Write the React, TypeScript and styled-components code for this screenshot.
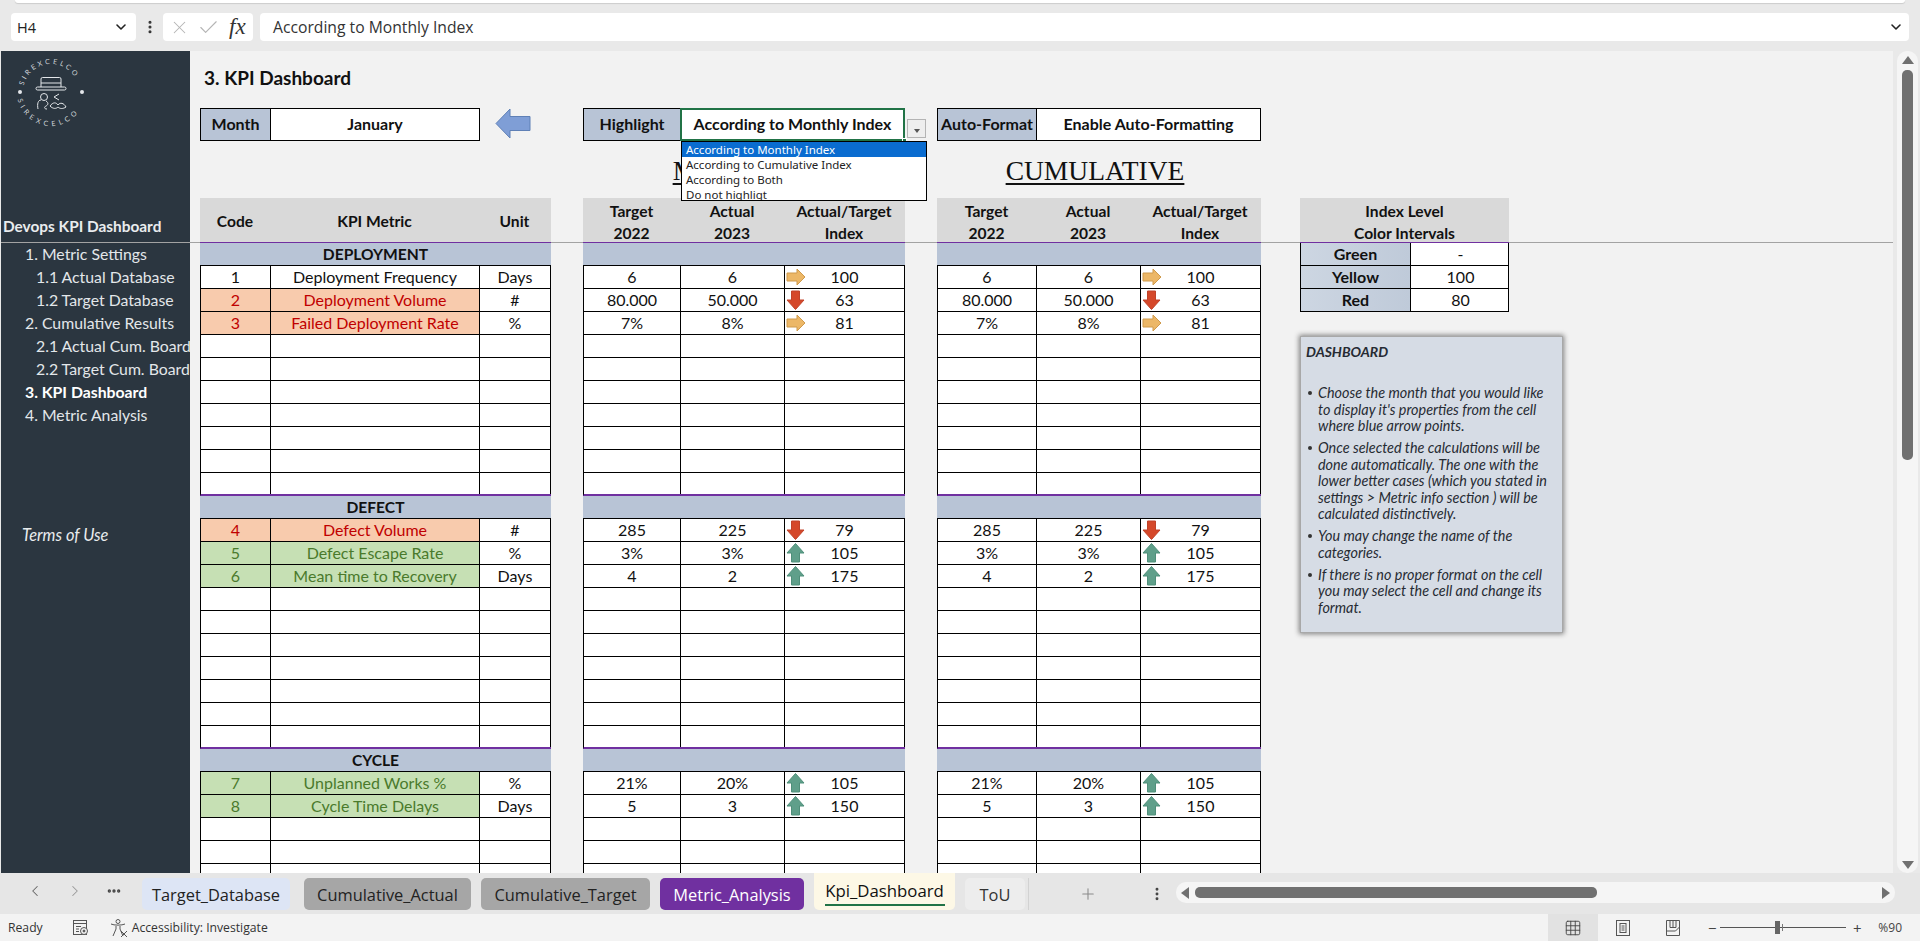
import React from "react";
import styled, { createGlobalStyle } from "styled-components";
import { ChevronDown, ChevronLeft, ChevronRight, Check, X, Plus, MoreVertical, MoreHorizontal, Grid3x3 } from "lucide-react";

const Global = createGlobalStyle`
  html, body { margin: 0; padding: 0; height: 100%; overflow: hidden; background: #e9e9e9; }
  * { box-sizing: border-box; }
  body { font-family: Lato, "Liberation Sans", sans-serif; color: #111; }
`;

const Page = styled.div`
  width: 1920px; height: 941px; display: flex; flex-direction: column; background: #e9e9e9; overflow: hidden;
`;
const TopStrip = styled.div`
  height: 3px; margin: 0 15px; background: #fff; border-radius: 0 0 6px 6px; box-shadow: 0 1px 1px #ccc; flex: none;
`;
const FormulaBar = styled.div`
  flex: none; height: 48px; padding: 10px 11px 10px 11px; display: flex; align-items: flex-start; font-family: "Open Sans", sans-serif;
`;
const NameBox = styled.div`
  width: 125px; height: 28px; background: #fff; border-radius: 4px; display: flex; align-items: center; justify-content: space-between;
  padding: 0 7px 0 6px; font-size: 14.5px; color: #222;
`;
const DotsSlot = styled.div`
  width: 27px; height: 28px; display: flex; align-items: center; justify-content: center; color: #333;
`;
const FxBox = styled.div`
  width: 90px; height: 28px; background: #fff; border-radius: 4px; display: flex; align-items: center; padding: 0 5px 0 6px; gap: 7px; color: #b5b5b5;
`;
const FxText = styled.span`
  font-family: "Liberation Serif", serif; font-style: italic; font-size: 23px; color: #333; margin-left: 2px;
`;
const FormulaInput = styled.div`
  flex: 1; margin-left: 7px; height: 28px; background: #fff; border-radius: 4px; display: flex; align-items: center; justify-content: space-between;
  padding: 0 5px 0 13px; font-size: 15.7px; color: #333;
`;

const Main = styled.div`
  flex: none; height: 822px; position: relative; display: flex; padding-left: 1px; overflow: hidden;
`;
const FreezeLine = styled.div`
  position: absolute; left: 1px; width: 1892px; top: 191px; height: 1px; background: #a3a3a3; z-index: 1;
`;
const Sidebar = styled.aside`
  width: 189px; flex: none; background: #2b3640; color: #e9ecee; display: flex; flex-direction: column; overflow: hidden; white-space: nowrap; font-size: 15.8px;
`;
const LogoWrap = styled.div`
  height: 160px; padding: 0 0 0 8px; flex: none;
`;
const Brand = styled.div`
  height: 32px; padding: 6px 0 0 2px; font-weight: 700; font-size: 15.4px; line-height: 19px; flex: none;
`;
const NavItem = styled.div<{ $level: number; $bold?: boolean }>`
  height: 23px; line-height: 21px; flex: none; padding-left: ${(p) => (p.$level === 1 ? 24 : 35)}px; font-weight: ${(p) => (p.$bold ? 700 : 400)};
  color: ${(p) => (p.$bold ? "#fff" : "#e3e7ea")};
`;
const Terms = styled.div`
  margin-top: 96px; padding-left: 21px; font-style: italic; font-size: 16.4px; height: 23px; line-height: 23px;
`;

const Sheet = styled.div`
  width: 1703px; flex: none; background: #f2f2f2; padding-left: 10px; overflow: hidden;
`;
const Title = styled.h1`
  margin: 0; height: 57px; padding: 16px 0 0 4px; font-size: 19px; line-height: 22px; font-weight: 700; color: #111;
`;
const Columns = styled.div`
  display: grid; grid-template-columns: 351px 322px 324px 263px; column-gap: 32px; position: relative; z-index: 2;
`;
const Column = styled.div<{ $shift?: number }>`
  position: relative; display: flex; flex-direction: column; margin-left: ${(p) => p.$shift ?? 0}px;
`;
const ControlRow = styled.div`
  height: 33px; display: flex; align-items: flex-start; gap: 15px; flex: none;
`;
const ControlBox = styled.div<{ $cols: string; $w: number }>`
  width: ${(p) => p.$w}px; height: 33px; display: grid; grid-template-columns: ${(p) => p.$cols}; border: 1px solid #000; background: #fff;
  font-weight: 700; font-size: 16px;
`;
const ControlLabel = styled.div`
  background: #b8c4d6; border-right: 1px solid #000; display: flex; align-items: center; justify-content: center; white-space: nowrap; padding-bottom: 2px;
`;
const ControlValue = styled.div<{ $selected?: boolean }>`
  display: flex; align-items: center; justify-content: center; position: relative; padding-bottom: 2px;
  ${(p) => (p.$selected ? "outline: 2px solid #217346; outline-offset: -1px;" : "")}
`;
const FillHandle = styled.span`
  position: absolute; right: -3px; bottom: -3px; width: 5px; height: 5px; background: #217346; border: 1px solid #fff;
`;
const DropButton = styled.div`
  position: absolute; left: 324px; top: 11px; width: 19px; height: 19px; background: #eeeeee; border: 1px solid #b4b4b4; z-index: 5;
  display: flex; align-items: center; justify-content: center; padding-top: 5px;
  &::after { content: ""; border-left: 3.5px solid transparent; border-right: 3.5px solid transparent; border-top: 4px solid #555; }
`;
const DropList = styled.div`
  position: absolute; left: 98px; top: 33px; width: 246px; height: 60px; background: #fff; border: 1px solid #000; z-index: 6;
  font-family: "Noto Sans", sans-serif; font-size: 11.5px; overflow: hidden;
`;
const DropOption = styled.div<{ $active?: boolean }>`
  height: 15px; line-height: 15px; padding-left: 4px; white-space: nowrap;
  background: ${(p) => (p.$active ? "#0a6cd0" : "#fff")}; color: ${(p) => (p.$active ? "#fff" : "#222")};
`;
const Heading = styled.div`
  height: 57px; flex: none; display: flex; align-items: center; justify-content: center; padding: 2px 8px 0 0;
  font-family: "Liberation Serif", serif; font-size: 27.5px; color: #111; text-decoration: underline; text-underline-offset: 3px; text-decoration-thickness: 2px;
`;
const Spacer = styled.div<{ $h: number }>`
  height: ${(p) => p.$h}px; flex: none;
`;
const HeaderRow = styled.div<{ $cols: string }>`
  height: 45px; flex: none; display: grid; grid-template-columns: ${(p) => p.$cols}; background: #d9d9d9; border-bottom: 1px solid #7030a0;
`;
const HeaderCell = styled.div`
  display: flex; align-items: center; justify-content: center; text-align: center; font-weight: 700; font-size: 15.6px; line-height: 22px; white-space: pre-line; padding-top: 2px;
`;
const Band = styled.div`
  height: 23px; flex: none; background: #b8c4d6; border-bottom: 1px solid #000; text-align: center; font-weight: 700; font-size: 15.6px; line-height: 22px;
`;
const Row = styled.div<{ $cols: string; $last?: boolean }>`
  height: 23px; flex: none; display: grid; grid-template-columns: ${(p) => p.$cols}; background: #fff; border-left: 1px solid #000;
  border-bottom: ${(p) => (p.$last ? "2px solid #7030a0" : "1px solid #000")};
`;
const Cell = styled.div<{ $tone?: "bad" | "good" }>`
  position: relative; border-right: 1px solid #000; display: flex; align-items: center; justify-content: center; font-size: 16px; white-space: nowrap; color: #111; padding-bottom: 2px;
  ${(p) => p.$tone === "bad" && "background:#f8cbad;color:#c00000;"}
  ${(p) => p.$tone === "good" && "background:#c6e0b4;color:#4a7a2c;"}
`;
const IconSlot = styled.span`
  position: absolute; left: 1px; top: 1px; width: 20px; height: 20px; display: block;
`;
const IndexRow = styled.div`
  height: 23px; width: 209px; display: grid; grid-template-columns: 110px 99px; border: 1px solid #000; border-top: 0; background: #fff; font-size: 16px;
`;
const IndexHead = styled(HeaderRow)`
  width: 209px;
`;
const IndexLabel = styled.div`
  background: linear-gradient(90deg, #cdd6e2, #bfcad9); border-right: 1px solid #000; display: flex; align-items: center; justify-content: center; font-weight: 700; padding-bottom: 2px;
`;
const IndexValue = styled.div`
  display: flex; align-items: center; justify-content: center; padding-bottom: 2px;
`;
const NoteBox = styled.div`
  margin-top: 24px; width: 263px; height: 297px; background: #d6dce5; border: 1px solid #a8a8a8; box-shadow: 0 0 5px 1px #808080;
  padding: 7px 4px 0 5px; font-style: italic; font-size: 14.4px; line-height: 16.5px; color: #262b33;
`;
const NoteTitle = styled.div`
  height: 41px; font-weight: 700; font-size: 14px;
`;
const NoteList = styled.ul`
  margin: 0; padding: 0 0 0 12px; list-style: none;
`;
const NoteItem = styled.li`
  position: relative; margin-bottom: 5.6px;
  &::before { content: ""; position: absolute; left: -10px; top: 6px; width: 4px; height: 4px; border-radius: 50%; background: #333; }
`;

const VScroll = styled.div`
  flex: none; width: 21px; margin-left: 4px; background: #f5f5f5; border-radius: 10px; display: flex; flex-direction: column; align-items: center; padding-top: 5px; position: relative; height: 822px;
`;
const VThumb = styled.div`
  width: 11px; height: 390px; margin-top: 6px; background: #707070; border-radius: 5px;
`;
const TriUp = styled.div`
  width: 0; height: 0; border-left: 6px solid transparent; border-right: 6px solid transparent; border-bottom: 8px solid #707070;
`;
const TriDown = styled.div`
  position: absolute; bottom: 4px; left: 4.5px; width: 0; height: 0; border-left: 6px solid transparent; border-right: 6px solid transparent; border-top: 8px solid #707070;
`;

const TabBar = styled.div`
  flex: none; height: 41px; background: #e6e6e6; display: flex; align-items: flex-start; font-family: "Open Sans", sans-serif;
`;
const TabNav = styled.div`
  width: 142px; height: 36px; flex: none; display: flex; align-items: center; color: #666; padding-left: 26px; gap: 22px;
`;
const Tabs = styled.div`
  display: flex; gap: 10px; height: 37px;
`;
const Tab = styled.div<{ $w: number; $bg: string; $fg?: string; $gapAfter?: number }>`
  width: ${(p) => p.$w}px; height: 32px; margin-top: 5px; margin-right: ${(p) => p.$gapAfter ?? 0}px; background: ${(p) => p.$bg}; color: ${(p) => p.$fg ?? "#222"};
  border-radius: 5px; display: flex; align-items: center; justify-content: center; font-size: 16.4px; white-space: nowrap;
`;
const ActiveTab = styled.div`
  width: 141px; height: 37px; background: #fdf8e6; border-radius: 0 0 5px 5px; display: flex; flex-direction: column; align-items: center; padding-top: 5px;
  font-size: 16.8px; line-height: 26px; font-weight: 500; color: #111; white-space: nowrap;
  &::after { content: ""; width: 120px; height: 2px; background: #217346; margin-top: 0px; }
`;
const AddSlot = styled.div`
  width: 133px; height: 32px; margin-top: 5px; display: flex; align-items: center; color: #8a8a8a; padding-left: 50px; gap: 52px; border-left: 1px solid #d2d2d2; margin-left: -7px; flex: none;
`;
const AddIcon = styled(Plus)`
  flex: none;
`;
const HScroll = styled.div`
  margin-left: 15px; margin-top: 9px; width: 719px; height: 21px; background: #f5f5f5; border-radius: 10px; display: flex; align-items: center; padding: 0 5px; flex: none; position: relative;
`;
const HThumb = styled.div`
  width: 402px; height: 11px; margin-left: 6px; background: #707070; border-radius: 5px;
`;
const TriLeft = styled.div`
  width: 0; height: 0; border-top: 6px solid transparent; border-bottom: 6px solid transparent; border-right: 8px solid #707070;
`;
const TriRight = styled.div`
  position: absolute; right: 5px; width: 0; height: 0; border-top: 6px solid transparent; border-bottom: 6px solid transparent; border-left: 8px solid #707070;
`;

const StatusBar = styled.div`
  flex: none; height: 27px; background: #f3f3f3; display: flex; align-items: center; font-family: "Open Sans", sans-serif; font-size: 12.2px; color: #333; padding-left: 8px;
`;
const StatusIconSlot = styled.span<{ $left: number; $right?: number }>`
  display: flex; align-items: center; color: #444; margin-left: ${(p) => p.$left}px; margin-right: ${(p) => p.$right ?? 0}px;
`;
const StatusRight = styled.div`
  margin-left: auto; display: flex; align-items: center; height: 27px; padding-right: 18px;
`;
const ViewBtn = styled.div<{ $on?: boolean }>`
  width: 50px; height: 27px; display: flex; align-items: center; justify-content: center; background: ${(p) => (p.$on ? "#e2e2e2" : "transparent")}; color: #444;
`;
const ZoomTrack = styled.div`
  width: 126px; height: 1px; background: #555; position: relative; margin: 0 6px 0 3px;
`;
const ZoomThumb = styled.span`
  position: absolute; left: 55px; top: -6px; width: 5px; height: 13px; background: #666;
`;
const ZoomTick = styled.span`
  position: absolute; left: 62px; top: -3px; width: 1px; height: 7px; background: #777;
`;
const ZoomSign = styled.span<{ $left?: number }>`
  font-size: 15px; color: #444; width: 10px; text-align: center; margin-left: ${(p) => p.$left ?? 0}px;
`;
const ZoomValue = styled.span`
  margin-left: 16px; font-size: 12px; color: #444;
`;

function Logo() {
  return (
    <svg width="84" height="84" viewBox="0 0 84 84">
      <defs>
        <path id="topArc" d="M14 41 A 28 28 0 0 1 70 41" />
        <path id="botArc" d="M8 41 A 34 34 0 0 0 76 41" />
      </defs>
      <g fill="#cfd4d8" fontFamily="Lato, sans-serif" fontSize="7">
        <text letterSpacing="2.7"><textPath href="#topArc" startOffset="7%">SIREXCELCO</textPath></text>
        <text letterSpacing="3.9"><textPath href="#botArc" startOffset="7%">SIREXCELCO</textPath></text>
      </g>
      <circle cx="11" cy="41" r="2" fill="#e4e7ea" />
      <circle cx="73" cy="41" r="2" fill="#e4e7ea" />
      <g transform="translate(42 41)" fill="none" stroke="#e4e7ea" strokeWidth="1">
        <path d="M-10 -5V-13a1.500 1.500 0 0 1 1.500-1.500h17a1.500 1.500 0 0 1 1.500 1.500v8" />
        <path d="M-10 -9h20" />
        <rect x="-15" y="-5" width="30" height="3" rx="1.500" />
        <circle cx="-7" cy="5" r="3.500" />
        <path d="M-13 17c-1-5 0-9 3-9M-5 9c3 2 2 4 0 5s-2 3 1 3" />
        <path d="M8 2l-5 3 5 3" />
        <path d="M-1 14c3-4 6-4 8-1 2-3 6-2 8 2-3 2-6 2-8 0-2 2-5 2-8-1z" />
      </g>
    </svg>
  );
}

function TrendIcon({ dir }: { dir: "up" | "down" | "right" }) {
  if (dir === "right")
    return (
      <svg width="20" height="20" viewBox="0 0 20 20"><path d="M1 6h10V2l8 8-8 8v-4H1z" fill="#ecb767" stroke="#cf9a4c" /></svg>
    );
  if (dir === "down")
    return (
      <svg width="20" height="20" viewBox="0 0 20 20"><path d="M5.500 1h8v9H18l-8.500 9.500L1 10h4.500z" fill="#d5482a" stroke="#c0432a" /></svg>
    );
  return (
    <svg width="20" height="20" viewBox="0 0 20 20"><path d="M9.500 .5L18 10h-4.500v9h-8v-9H1z" fill="#5f9f8a" stroke="#4f8f7a" /></svg>
  );
}

type Metric = { code: string; name: string; unit: string; tone: "bad" | "good" | null; t: string; a: string; dir: "up" | "down" | "right"; idx: string };

const sections: { title: string; rows: Metric[]; blanks: number; last: boolean }[] = [
  {
    title: "DEPLOYMENT",
    blanks: 7,
    last: true,
    rows: [
      { code: "1", name: "Deployment Frequency", unit: "Days", tone: null, t: "6", a: "6", dir: "right", idx: "100" },
      { code: "2", name: "Deployment Volume", unit: "#", tone: "bad", t: "80.000", a: "50.000", dir: "down", idx: "63" },
      { code: "3", name: "Failed Deployment Rate", unit: "%", tone: "bad", t: "7%", a: "8%", dir: "right", idx: "81" },
    ],
  },
  {
    title: "DEFECT",
    blanks: 7,
    last: true,
    rows: [
      { code: "4", name: "Defect Volume", unit: "#", tone: "bad", t: "285", a: "225", dir: "down", idx: "79" },
      { code: "5", name: "Defect Escape Rate", unit: "%", tone: "good", t: "3%", a: "3%", dir: "up", idx: "105" },
      { code: "6", name: "Mean time to Recovery", unit: "Days", tone: "good", t: "4", a: "2", dir: "up", idx: "175" },
    ],
  },
  {
    title: "CYCLE",
    blanks: 3,
    last: false,
    rows: [
      { code: "7", name: "Unplanned Works %", unit: "%", tone: "good", t: "21%", a: "20%", dir: "up", idx: "105" },
      { code: "8", name: "Cycle Time Delays", unit: "Days", tone: "good", t: "5", a: "3", dir: "up", idx: "150" },
    ],
  },
];

const LEFT = "70px 209px 71px";
const MID = "97px 104px 120px";
const RIGHT = "99px 104px 120px";

function blanks(n: number, last: boolean, cols: string, cells: number) {
  return Array.from({ length: n }, (_, i) => (
    <Row key={i} $cols={cols} $last={last && i === n - 1}>
      {Array.from({ length: cells }, (_, c) => <Cell key={c} />)}
    </Row>
  ));
}

function MetricSections() {
  return (
    <>
      {sections.map((s) => (
        <React.Fragment key={s.title}>
          <Band>{s.title}</Band>
          {s.rows.map((r) => (
            <Row key={r.code} $cols={LEFT}>
              <Cell $tone={r.tone ?? undefined}>{r.code}</Cell>
              <Cell $tone={r.tone ?? undefined}>{r.name}</Cell>
              <Cell>{r.unit}</Cell>
            </Row>
          ))}
          {blanks(s.blanks, s.last, LEFT, 3)}
        </React.Fragment>
      ))}
    </>
  );
}

function ValueSections({ cols }: { cols: string }) {
  return (
    <>
      {sections.map((s) => (
        <React.Fragment key={s.title}>
          <Band />
          {s.rows.map((r) => (
            <Row key={r.code} $cols={cols}>
              <Cell>{r.t}</Cell>
              <Cell>{r.a}</Cell>
              <Cell>
                <IconSlot><TrendIcon dir={r.dir} /></IconSlot>
                {r.idx}
              </Cell>
            </Row>
          ))}
          {blanks(s.blanks, s.last, cols, 3)}
        </React.Fragment>
      ))}
    </>
  );
}

const HeaderValues = ({ cols }: { cols: string }) => (
  <HeaderRow $cols={cols}>
    <HeaderCell>{"Target\n2022"}</HeaderCell>
    <HeaderCell>{"Actual\n2023"}</HeaderCell>
    <HeaderCell>{"Actual/Target\nIndex"}</HeaderCell>
  </HeaderRow>
);

export default function App() {
  return (
    <Page>
      <Global />
      <TopStrip />
      <FormulaBar>
        <NameBox>H4<ChevronDown size={16} color="#222" strokeWidth={2.4} /></NameBox>
        <DotsSlot><MoreVertical size={16} strokeWidth={2.6} /></DotsSlot>
        <FxBox>
          <X size={21} strokeWidth={1.2} />
          <Check size={23} strokeWidth={1.2} />
          <FxText>fx</FxText>
        </FxBox>
        <FormulaInput>According to Monthly Index<ChevronDown size={16} color="#222" strokeWidth={2.4} /></FormulaInput>
      </FormulaBar>
      <Main>
        <FreezeLine />
        <Sidebar>
          <LogoWrap><Logo /></LogoWrap>
          <Brand>Devops KPI Dashboard</Brand>
          <NavItem $level={1}>1. Metric Settings</NavItem>
          <NavItem $level={2}>1.1 Actual Database</NavItem>
          <NavItem $level={2}>1.2 Target Database</NavItem>
          <NavItem $level={1}>2. Cumulative Results</NavItem>
          <NavItem $level={2}>2.1 Actual Cum. Board</NavItem>
          <NavItem $level={2}>2.2 Target Cum. Board</NavItem>
          <NavItem $level={1} $bold>3. KPI Dashboard</NavItem>
          <NavItem $level={1}>4. Metric Analysis</NavItem>
          <Terms>Terms of Use</Terms>
        </Sidebar>
        <Sheet>
          <Title>3. KPI Dashboard</Title>
          <Columns>
            <Column>
              <ControlRow>
                <ControlBox $w={280} $cols="70px 1fr">
                  <ControlLabel>Month</ControlLabel>
                  <ControlValue>January</ControlValue>
                </ControlBox>
                <svg width="36" height="31" viewBox="0 0 36 31">
                  <path d="M1 15.500L15 1v7.500h20v14H15V30z" fill="#7f9ed6" stroke="#5f80b6" strokeWidth="1" />
                </svg>
              </ControlRow>
              <Spacer $h={57} />
              <HeaderRow $cols={LEFT}>
                <HeaderCell>Code</HeaderCell>
                <HeaderCell>KPI Metric</HeaderCell>
                <HeaderCell>Unit</HeaderCell>
              </HeaderRow>
              <MetricSections />
            </Column>
            <Column>
              <ControlRow>
                <ControlBox $w={323} $cols="97px 1fr">
                  <ControlLabel>Highlight</ControlLabel>
                  <ControlValue $selected>According to Monthly Index<FillHandle /></ControlValue>
                </ControlBox>
              </ControlRow>
              <DropButton />
              <DropList>
                <DropOption $active>According to Monthly Index</DropOption>
                <DropOption>According to Cumulative Index</DropOption>
                <DropOption>According to Both</DropOption>
                <DropOption>Do not highligt</DropOption>
              </DropList>
              <Heading>MONTHLY</Heading>
              <HeaderValues cols={MID} />
              <ValueSections cols={MID} />
            </Column>
            <Column>
              <ControlRow>
                <ControlBox $w={324} $cols="99px 1fr">
                  <ControlLabel>Auto-Format</ControlLabel>
                  <ControlValue>Enable Auto-Formatting</ControlValue>
                </ControlBox>
              </ControlRow>
              <Heading>CUMULATIVE</Heading>
              <HeaderValues cols={RIGHT} />
              <ValueSections cols={RIGHT} />
            </Column>
            <Column $shift={7}>
              <Spacer $h={90} />
              <IndexHead $cols="1fr">
                <HeaderCell>{"Index Level\nColor Intervals"}</HeaderCell>
              </IndexHead>
              <IndexRow><IndexLabel>Green</IndexLabel><IndexValue>-</IndexValue></IndexRow>
              <IndexRow><IndexLabel>Yellow</IndexLabel><IndexValue>100</IndexValue></IndexRow>
              <IndexRow><IndexLabel>Red</IndexLabel><IndexValue>80</IndexValue></IndexRow>
              <NoteBox>
                <NoteTitle>DASHBOARD</NoteTitle>
                <NoteList>
                  <NoteItem>Choose the month that you would like to display it's properties from the cell where blue arrow points.</NoteItem>
                  <NoteItem>Once selected the calculations will be done automatically. The one with the lower better cases (which you stated in settings &gt; Metric info section ) will be calculated distinctively.</NoteItem>
                  <NoteItem>You may change the name of the categories.</NoteItem>
                  <NoteItem>If there is no proper format on the cell you may select the cell and change its format.</NoteItem>
                </NoteList>
              </NoteBox>
            </Column>
          </Columns>
        </Sheet>
        <VScroll>
          <TriUp />
          <VThumb />
          <TriDown />
        </VScroll>
      </Main>
      <TabBar>
        <TabNav>
          <ChevronLeft size={18} strokeWidth={1.4} />
          <ChevronRight size={18} strokeWidth={1.4} color="#999" />
          <MoreHorizontal size={16} strokeWidth={3} color="#444" />
        </TabNav>
        <Tabs>
          <Tab $w={148} $bg="#dde5f5" $gapAfter={4}>Target_Database</Tab>
          <Tab $w={167} $bg="#a6a6a6">Cumulative_Actual</Tab>
          <Tab $w={169} $bg="#a6a6a6">Cumulative_Target</Tab>
          <Tab $w={144} $bg="#7030a0" $fg="#fff">Metric_Analysis</Tab>
          <ActiveTab>Kpi_Dashboard</ActiveTab>
          <Tab $w={60} $bg="#ededed" $fg="#333">ToU</Tab>
          <AddSlot>
            <AddIcon size={18} strokeWidth={1.4} />
            <MoreVertical size={16} strokeWidth={2.4} color="#444" style={{ flex: "none" }} />
          </AddSlot>
        </Tabs>
        <HScroll>
          <TriLeft />
          <HThumb />
          <TriRight />
        </HScroll>
      </TabBar>
      <StatusBar>
        Ready
        <StatusIconSlot $left={29}>
          <svg width="18" height="18" viewBox="0 0 18 18" fill="none" stroke="#555" strokeWidth="1">
            <rect x="1.500" y="1.500" width="13" height="14" />
            <path d="M1.500 4.500h13M4 7.500h5M4 10h3M4 12.500h3" />
            <circle cx="12" cy="12" r="3.500" fill="#f3f3f3" />
            <circle cx="12" cy="12" r="1" fill="#555" />
          </svg>
        </StatusIconSlot>
        <StatusIconSlot $left={19} $right={3}>
          <svg width="20" height="20" viewBox="0 0 20 20" fill="none" stroke="#555" strokeWidth="1">
            <circle cx="9" cy="3.500" r="2" />
            <path d="M2 6c3 1.500 11 1.500 14 0M7 8v3l-3 7M11 8v3l3 7" />
            <path d="M12 13l6 6M18 13l-6 6" />
          </svg>
        </StatusIconSlot>
        Accessibility: Investigate
        <StatusRight>
          <ViewBtn $on><Grid3x3 size={18} strokeWidth={1.2} /></ViewBtn>
          <ViewBtn>
            <svg width="18" height="18" viewBox="0 0 18 18" fill="none" stroke="#555"><rect x="2.500" y="1.500" width="13" height="15" /><rect x="6" y="4.500" width="6" height="9" /><path d="M7.500 7h3M7.500 9h3M7.500 11h3" /></svg>
          </ViewBtn>
          <ViewBtn>
            <svg width="18" height="18" viewBox="0 0 18 18" fill="none" stroke="#555"><path d="M2.500 1.500h13v15h-13zM6 1.500v7h3v-7M9 8.500h3v-7M2.500 12h9l4-4" /></svg>
          </ViewBtn>
          <ZoomSign $left={9}>−</ZoomSign>
          <ZoomTrack><ZoomThumb /><ZoomTick /></ZoomTrack>
          <ZoomSign>+</ZoomSign>
          <ZoomValue>%90</ZoomValue>
        </StatusRight>
      </StatusBar>
    </Page>
  );
}
